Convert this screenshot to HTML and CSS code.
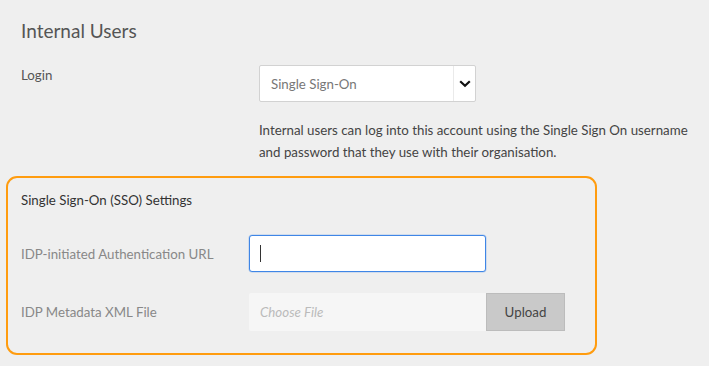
FILE: index.html
```html
<!DOCTYPE html>
<html lang="en">
<head>
    <meta charset="UTF-8">
    <title>Internal Users</title>
    <link rel="stylesheet" href="styles.css">
</head>
<body>
    <div class="page">
        <h2 class="title">Internal Users</h2>

        <div class="row login-row">
            <div class="row-label">Login</div>
            <div class="row-field">
                <div class="select">
                    <span class="select-value">Single Sign-On</span>
                    <span class="select-arrow">
                        <svg width="12" height="8" viewBox="0 0 12 8"><path d="M1.2 1.2 L6 5.8 L10.8 1.2" fill="none" stroke="#111" stroke-width="2.2"/></svg>
                    </span>
                </div>
                <p class="help">Internal users can log into this account using the Single Sign On username and password that they use with their organisation.</p>
            </div>
        </div>

        <div class="sso-box">
            <div class="sso-title">Single Sign-On (SSO) Settings</div>
            <div class="row sso-row">
                <div class="row-label muted">IDP-initiated Authentication URL</div>
                <div class="text-input"><span class="caret"></span></div>
            </div>
            <div class="row sso-row">
                <div class="row-label muted">IDP Metadata XML File</div>
                <div class="file-input">
                    <span class="file-name">Choose File</span>
                    <span class="upload-btn">Upload</span>
                </div>
            </div>
        </div>
    </div>
</body>
</html>
```

FILE: styles.css
```css
body { margin: 0; background-color: #efefef; color: #555; font-family: "Lato", "Open Sans", sans-serif; font-size: 13.3px; }
.page { padding: 20px 6px 0 6px; width: 590px; }
.title { margin: 0 0 0 15px; font-size: 19px; font-weight: normal; color: #555; line-height: 22px; }

.row { display: flex; }
.row-label { width: 238px; flex-shrink: 0; color: #555; }
.muted { color: #888; }

.login-row { margin-top: 23px; padding-left: 15px; }
.login-row .row-label { padding-top: 2px; }
.select {
    width: 215px; height: 35px; background: #fff; border: 1px solid #d2d2d2; border-radius: 2px;
    display: flex; align-items: center; justify-content: space-between;
}
.select-value { padding-left: 11px; color: #777; }
.select-arrow { width: 21px; height: 100%; border-left: 1px solid #eaeaea; display: flex; align-items: center; justify-content: center; }
.help { margin: 17px 0 0 0; width: 450px; line-height: 22px; color: #444; }

.sso-box {
    margin-top: 13px; border: 2px solid #ff9c0f; border-radius: 11px;
    padding: 14px 0 22px 13px; box-sizing: border-box; width: 591px;
}
.sso-title { color: #333; }
.sso-row { align-items: center; }
.sso-row .row-label { width: 228px; }
.sso-row:nth-child(2) { margin-top: 27px; }
.sso-row:nth-child(3) { margin-top: 21px; }

.text-input {
    width: 235px; height: 35px; background: #fff; border: 1px solid #3f86e6; border-radius: 3px;
    box-shadow: 0 0 0 0.5px rgba(63, 134, 230, 0.35);
    display: flex; align-items: center;
}
.caret { display: block; width: 1px; height: 17px; background: #333; margin-left: 10px; }

.file-input { display: flex; height: 38px; }
.file-name {
    width: 226px; padding-left: 11px; background: #f6f6f6; color: #bbb; font-style: italic;
    display: flex; align-items: center; border-radius: 2px 0 0 2px;
}
.upload-btn {
    width: 77px; background: #c9c9c9; border: 1px solid #bcbcbc; color: #444;
    display: flex; align-items: center; justify-content: center;
}
```
